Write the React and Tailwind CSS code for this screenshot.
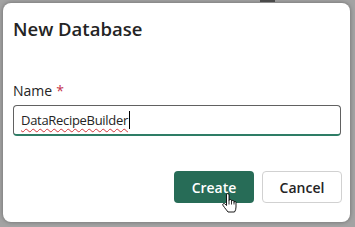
import React from 'react';

const HandCursor = () => (
  <svg width="15" height="20" viewBox="0 0 15 20" className="absolute left-[222px] top-[193px]">
    <path
      d="M4.5 2 Q4.5 0.5 5.75 0.5 Q7 0.5 7 2 V7.5 Q7 6.5 8.25 6.5 Q9.5 6.5 9.5 7.5 V8.5 Q9.5 7.5 10.75 7.5 Q12 7.5 12 8.5 V9.5 Q12 8.5 13 8.5 Q14 8.5 14 9.5 V14 Q14 17 12.5 19 H6 Q4.5 17 2.5 14.5 L0.9 12.2 Q0.4 11 1.4 10.6 Q2.4 10.3 3.1 11 L4.5 12.5 Z"
      fill="#fff"
      stroke="#000"
      strokeWidth="0.9"
      strokeLinejoin="round"
    />
    <path d="M7 7.5 V11.5 M9.5 8.5 V11.5 M12 9.5 V11.5" stroke="#000" strokeWidth="0.8" fill="none" />
  </svg>
);

export default function App() {
  return (
    <div className="relative h-[227px] w-[355px] overflow-hidden bg-[#a3a3a3] pl-[3px] pt-[3px] pr-[5px] pb-[5px] font-['Open_Sans','Noto_Sans',sans-serif]">
      <div className="absolute left-[260px] top-0 h-[2px] w-[15px] bg-[#4a4a4a]" />
      <div className="flex h-full flex-col rounded-[8px] bg-white px-[10px] shadow-[0_0_4px_rgba(0,0,0,0.35)]">
        <h1 className="mt-[13px] text-[18.5px] font-semibold leading-[26px] text-[#242424]">New Database</h1>
        <label className="mt-[39px] text-[14px] leading-[20px] text-[#242424]">
          Name<span className="ml-[4px] text-[#c4314b]">*</span>
        </label>
        <div className="mt-[4px] flex h-[31px] w-[328px] items-center rounded-[4px] border border-[#616161] border-b-2 border-b-[#2e7d66] px-[7px]">
          <span className="text-[13px] leading-[20px] tracking-[-0.3px] text-[#242424] underline decoration-wavy decoration-[#d13438] decoration-1 underline-offset-[3px]">
            DataRecipeBuilder
          </span>
          <span className="ml-[1px] h-[18px] w-[1px] bg-black" />
        </div>
        <div className="mr-[-2px] mt-[35px] flex justify-end gap-[8px]">
          <button className="h-[32px] w-[80px] rounded-[4px] bg-[#276c57] text-[14px] font-semibold text-white">
            Create
          </button>
          <button className="h-[32px] w-[80px] rounded-[4px] border border-[#d1d1d1] bg-white text-[14px] font-semibold text-[#242424]">
            Cancel
          </button>
        </div>
      </div>
      <HandCursor />
    </div>
  );
}
